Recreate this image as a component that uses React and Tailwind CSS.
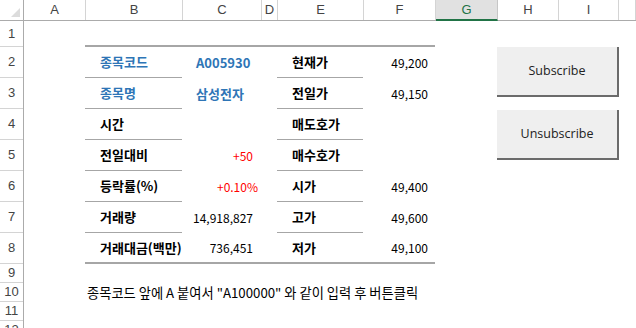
const COLS = [
  { name: 'A', w: 'w-[62px]' },
  { name: 'B', w: 'w-[97px]' },
  { name: 'C', w: 'w-[79px]' },
  { name: 'D', w: 'w-[16px]' },
  { name: 'E', w: 'w-[86px]' },
  { name: 'F', w: 'w-[72px]' },
  { name: 'G', w: 'w-[62px]', active: true },
  { name: 'H', w: 'w-[61px]' },
  { name: 'I', w: 'w-[60px]' },
  { name: '', w: 'flex-1' },
]

const ROWS = [
  { n: 1, h: 'h-[26px]' },
  { n: 2, h: 'h-[31px]' },
  { n: 3, h: 'h-[31px]' },
  { n: 4, h: 'h-[31px]' },
  { n: 5, h: 'h-[31px]' },
  { n: 6, h: 'h-[31px]' },
  { n: 7, h: 'h-[31px]' },
  { n: 8, h: 'h-[31px]' },
  { n: 9, h: 'h-[19px]' },
  { n: 10, h: 'h-[19px]' },
  { n: 11, h: 'h-[19px]' },
  { n: 12, h: 'h-[19px]' },
]

const QUOTE = [
  { label: '종목코드', blue: true, val: 'A005930', valCls: 'text-[#2e75b6] justify-start pl-[14px] font-semibold text-[13px]', e: '현재가', f: '49,200' },
  { label: '종목명', blue: true, val: '삼성전자', valCls: 'text-[#2e75b6] justify-start pl-[14px] font-semibold text-[13px]', e: '전일가', f: '49,150' },
  { label: '시간', val: '', valCls: '', e: '매도호가', f: '' },
  { label: '전일대비', val: '+50', valCls: 'text-[#ff0000] justify-end pr-[8px]', e: '매수호가', f: '' },
  { label: '등락률(%)', val: '+0.10%', valCls: 'text-[#ff0000] justify-end pr-[3px]', e: '시가', f: '49,400' },
  { label: '거래량', val: '14,918,827', valCls: 'text-black justify-end pr-[8px]', e: '고가', f: '49,600' },
  { label: '거래대금(백만)', val: '736,451', valCls: 'text-black justify-end pr-[8px]', e: '저가', f: '49,100' },
]

function QuoteTable() {
  return (
    <div className="w-[350px] border-t-2 border-b-2 border-[#a6a6a6]">
      {QUOTE.map((r, i) => {
        const last = i === QUOTE.length - 1
        return (
          <div key={r.label} className={`flex ${last ? 'h-[29px]' : 'h-[31px]'}`}>
            <div className={`w-[97px] flex items-center pl-[15px] text-[13px] font-semibold ${r.blue ? 'text-[#2e75b6]' : 'text-black'} ${last ? '' : 'border-b border-[#a6a6a6]'}`}>
              {r.label}
            </div>
            <div className={`w-[79px] flex items-center text-[12px] ${r.valCls}`}>{r.val}</div>
            <div className="w-[16px]" />
            <div className={`w-[86px] flex items-center pl-[15px] text-[13px] font-semibold text-black ${last ? '' : 'border-b border-[#a6a6a6]'}`}>
              {r.e}
            </div>
            <div className="w-[72px] flex items-center justify-end pr-[7px] text-[12px] text-black">{r.f}</div>
          </div>
        )
      })}
    </div>
  )
}

function SheetButton({ children, top }) {
  return (
    <button className={`absolute left-[473px] ${top} w-[122px] h-[50px] bg-[#efefef] border-r-2 border-b-2 border-[#6b6b6b] text-[12.5px] text-[#222] font-['Open_Sans',sans-serif]`}>
      {children}
    </button>
  )
}

export default function App() {
  return (
    <div className="w-[636px] h-[328px] overflow-hidden bg-white font-['Noto_Sans_CJK_KR','Noto_Sans',sans-serif]">
      <div className="flex h-[21px] border-b border-[#ababab]">
        <div className="w-[24px] border-r border-[#ababab] relative">
          <div className="absolute right-[3px] bottom-[3px] w-0 h-0 border-l-[9px] border-l-transparent border-b-[9px] border-b-[#dcdcdc]" />
        </div>
        {COLS.map((c) => (
          <div
            key={c.name || 'J'}
            className={`${c.w} flex items-center justify-center text-[13px] font-['Liberation_Sans',sans-serif] ${c.active ? 'bg-[#e1e1e1] text-[#217346] border-b-2 border-[#217346] -mb-px border-r border-r-[#c6c6c6]' : 'text-[#444] border-r border-[#d4d4d4]'}`}
          >
            {c.name}
          </div>
        ))}
      </div>

      <div className="flex">
        <div className="w-[24px] border-r border-[#ababab] flex flex-col">
          {ROWS.map((r) => (
            <div key={r.n} className={`${r.h} shrink-0 border-b border-[#d4d4d4] flex items-center justify-center text-[13px] text-[#444] font-['Liberation_Sans',sans-serif]`}>
              {r.n}
            </div>
          ))}
        </div>

        <div className="flex-1 relative flex flex-col">
          <div className="h-[24px]" />
          <div className="pl-[61px]">
            <QuoteTable />
          </div>
          <div className="h-[19px]" />
          <div className="h-[19px] pl-[63px] flex items-center text-[13.25px] text-black whitespace-nowrap">
            종목코드 앞에 A 붙여서 "A100000" 와 같이 입력 후 버튼클릭
          </div>

          <SheetButton top="top-[26px]">Subscribe</SheetButton>
          <SheetButton top="top-[89px]">Unsubscribe</SheetButton>
        </div>
      </div>
    </div>
  )
}
